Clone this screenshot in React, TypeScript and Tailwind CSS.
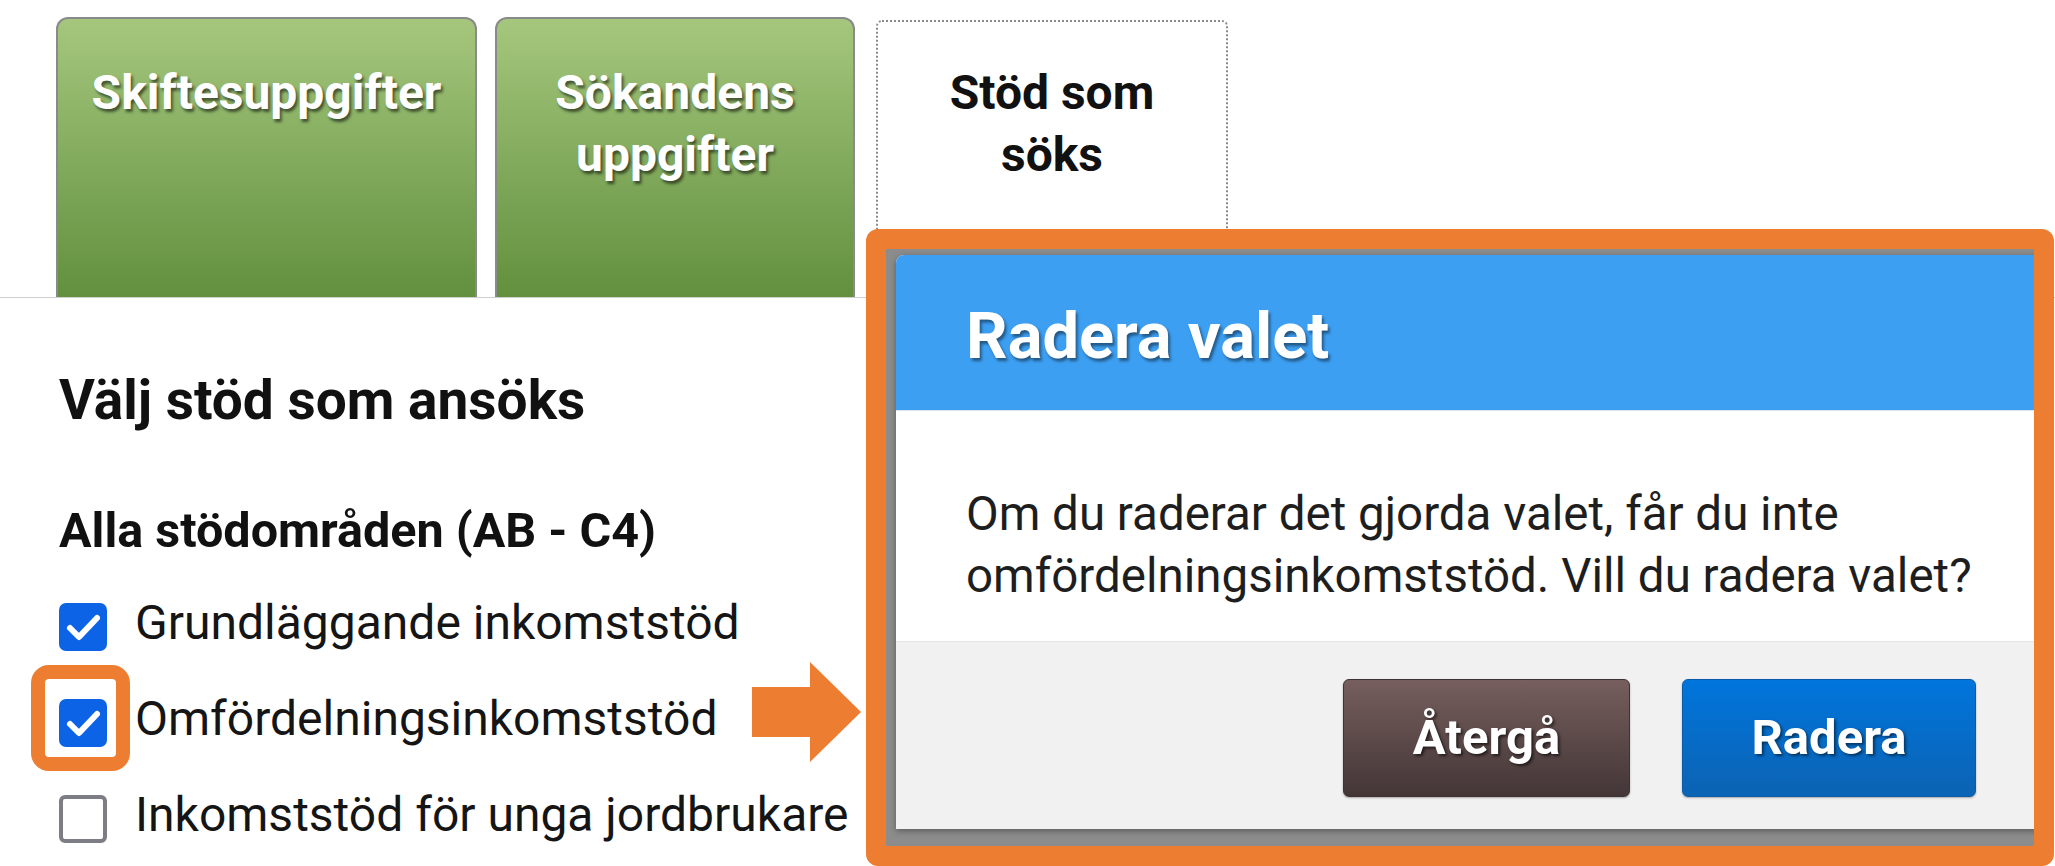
import React from "react";

function Check({ checked }: { checked: boolean }) {
  if (!checked) {
    return <div className="mt-[8px] h-[48px] w-[48px] shrink-0 rounded-[6px] border-[4px] border-[#7d7d86] bg-white" />;
  }
  return (
    <div className="mt-[8px] flex h-[48px] w-[48px] shrink-0 items-center justify-center rounded-[7px] bg-[#0d63e6]">
      <svg width="48" height="48" viewBox="0 0 48 48">
        <path d="M11 25 L20 34 L38 15" fill="none" stroke="white" strokeWidth="6" strokeLinecap="round" strokeLinejoin="round" />
      </svg>
    </div>
  );
}

export default function App() {
  const rows = [
    { label: "Grundläggande inkomststöd", checked: true },
    { label: "Omfördelningsinkomststöd", checked: true },
    { label: "Inkomststöd för unga jordbrukare", checked: false },
  ];
  return (
    <div className="relative h-[866px] w-[2055px] overflow-hidden bg-white font-['Roboto',sans-serif] text-[#111]">
      {/* Tabs */}
      <div className="flex items-end border-b border-[#cfcfcf] pl-[56px] pt-[17px]">
        <div className="h-[280px] w-[421px] rounded-t-[12px] border-2 border-b-0 border-[#8a8a8a] bg-linear-to-b from-[#a5c77d] to-[#62903e] pt-[43px] text-center text-[48px] font-bold leading-[62px] text-white [text-shadow:2px_3px_3px_rgba(0,0,0,0.55)]">
          Skiftesuppgifter
        </div>
        <div className="ml-[18px] h-[280px] w-[360px] rounded-t-[12px] border-2 border-b-0 border-[#8a8a8a] bg-linear-to-b from-[#a5c77d] to-[#62903e] pt-[43px] text-center text-[48px] font-bold leading-[62px] text-white [text-shadow:2px_3px_3px_rgba(0,0,0,0.55)]">
          Sökandens
          <br />
          uppgifter
        </div>
        <div className="ml-[21px] h-[277px] w-[352px] rounded-t-[6px] border-2 border-b-0 border-dotted border-[#8a8a8a] bg-white pt-[40px] text-center text-[48px] font-bold leading-[62px] text-[#111]">
          Stöd som
          <br />
          söks
        </div>
      </div>

      {/* Content */}
      <div className="pl-[59px]">
        <div className="mt-[70px] text-[55px] font-bold leading-[64px]">Välj stöd som ansöks</div>
        <div className="mt-[68px] text-[48.5px] font-bold leading-[62px]">Alla stödområden (AB - C4)</div>
        <div className="mt-[30px] flex flex-col gap-[34px]">
          {rows.map((r) => (
            <div key={r.label} className="flex h-[62px] items-center gap-[28px]">
              <Check checked={r.checked} />
              <span className="text-[48px] leading-[62px] text-[#151515]">{r.label}</span>
            </div>
          ))}
        </div>
      </div>

      {/* Highlight around checkbox */}
      <div className="absolute left-[31px] top-[665px] h-[106px] w-[99px] rounded-[18px] border-[14px] border-[#ed7d31]" />

      {/* Arrow */}
      <svg className="absolute left-[752px] top-[662px]" width="110" height="101" viewBox="0 0 110 101">
        <polygon points="0,25 58,25 58,0 109,50 58,100 58,75 0,75" fill="#ed7d31" />
      </svg>

      {/* Dialog annotation frame */}
      <div className="absolute bottom-0 left-[866px] right-[1px] top-[229px] overflow-hidden rounded-[12px] border-[20px] border-[#ed7d31] bg-[#8c8c8c]">
        <div className="flex h-full flex-col pl-[10px] pt-[6px]">
          <div className="w-[1200px] overflow-hidden rounded-tl-[8px] bg-white shadow-[0_2px_6px_rgba(0,0,0,0.35)]">
            <div className="flex h-[155px] items-center bg-[#3d9ff2] pl-[70px] pt-[6px] text-[65px] font-bold leading-[76px] text-white [text-shadow:2px_3px_3px_rgba(0,0,0,0.45)]">
              Radera valet
            </div>
            <div className="h-[231px] border-t border-[#d8e6f2] pl-[70px] pt-[72px] text-[47.5px] leading-[62px] text-[#1e1e1e]">
              Om du raderar det gjorda valet, får du inte
              <br />
              omfördelningsinkomststöd. Vill du radera valet?
            </div>
            <div className="flex h-[188px] gap-[52px] border-t border-[#e6e6e6] bg-[#f1f1f1] pl-[447px] pt-[37px]">
              <button className="flex h-[118px] w-[287px] items-center justify-center rounded-[6px] border border-[#3e3232] bg-linear-to-b from-[#765f5d] to-[#443637] text-[49px] font-bold text-white shadow-[0_1px_2px_rgba(0,0,0,0.3)] [text-shadow:2px_2px_3px_rgba(0,0,0,0.6)]">
                Återgå
              </button>
              <button className="flex h-[118px] w-[294px] items-center justify-center rounded-[6px] border border-[#0a5cab] bg-linear-to-b from-[#0075dc] to-[#0b63b3] text-[49px] font-bold text-white shadow-[0_1px_2px_rgba(0,0,0,0.3)] [text-shadow:2px_2px_3px_rgba(0,0,0,0.5)]">
                Radera
              </button>
            </div>
          </div>
        </div>
      </div>
    </div>
  );
}
